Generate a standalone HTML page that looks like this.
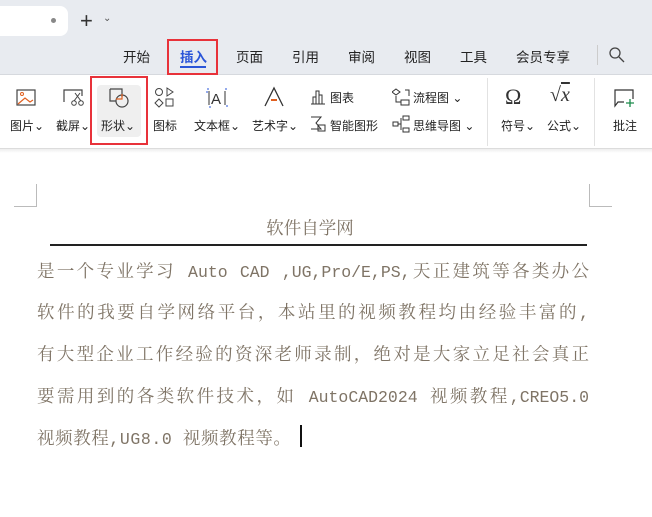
<!DOCTYPE html>
<html><head><meta charset="utf-8"><style>
*{margin:0;padding:0;box-sizing:border-box}
body{width:652px;height:517px;overflow:hidden;background:#fff;font-family:"Liberation Sans","Noto Sans CJK SC",sans-serif;position:relative;color:#222}
.top{position:absolute;left:0;top:0;width:652px;height:75px;background:#e8ebf0;border-bottom:1px solid #d6d9de}
.abs{position:absolute}
.tab{position:absolute;left:-10px;top:6px;width:78px;height:30px;background:#fff;border-radius:8px}
.m{position:absolute;top:46px;font-size:13.5px;color:#222}
.rib{position:absolute;left:0;top:75px;width:652px;height:74px;background:#fff;border-bottom:1px solid #dcdcdc}
.lb{position:absolute;top:117px;font-size:12px;color:#222;white-space:nowrap}
.red{position:absolute;border:2px solid #e8323a}
.doc{font-family:"Noto Serif CJK SC","Liberation Serif",serif;color:#7f7466;font-size:17.5px;position:absolute;left:37px;width:552px;white-space:nowrap;line-height:24px}
.doc span{font-family:"Liberation Mono",monospace;font-size:16.5px}
.j{text-align:justify;text-align-last:justify}
svg{position:absolute}
</style></head><body>
<div class="top">
 <div class="tab"></div>
 <div class="abs" style="left:51px;top:18px;width:5px;height:5px;border-radius:50%;background:#888"></div>
 <div class="abs" style="left:80px;top:8px;font-size:22px;color:#333">+</div>
 <div class="abs" style="left:103px;top:13px;font-size:10px;color:#555">⌄</div>
 <div class="m" style="left:123px">开始</div>
 <div class="m" style="left:180px;color:#2a55d8;font-weight:bold">插入</div>
 <div class="abs" style="left:180px;top:66px;width:26px;height:2px;background:#2a55d8"></div>
 <div class="m" style="left:236px">页面</div>
 <div class="m" style="left:292px">引用</div>
 <div class="m" style="left:348px">审阅</div>
 <div class="m" style="left:404px">视图</div>
 <div class="m" style="left:460px">工具</div>
 <div class="m" style="left:516px">会员专享</div>
 <div class="abs" style="left:597px;top:45px;width:1px;height:20px;background:#ccc"></div>
 <svg style="left:608px;top:46px" width="18" height="18"><circle cx="7" cy="7" r="5" fill="none" stroke="#444" stroke-width="1.3"/><path d="M11 11l5 5" stroke="#444" stroke-width="1.3"/></svg>
</div>
<div class="red" style="left:167px;top:39px;width:51px;height:36px"></div>
<div class="rib">
 <div class="abs" style="left:97px;top:10px;width:44px;height:52px;background:#efefef;border-radius:4px"></div>
 <div class="abs" style="left:487px;top:3px;width:1px;height:68px;background:#e2e2e2"></div>
 <div class="abs" style="left:594px;top:3px;width:1px;height:68px;background:#e2e2e2"></div>
</div>
<svg style="left:15px;top:88px" width="24" height="20"><rect x="2" y="2" width="18" height="15" fill="none" stroke="#444" stroke-width="1.2"/><circle cx="7" cy="6" r="1.5" fill="none" stroke="#e06020"/><path d="M3 16l7-6 5 4 3-2" fill="none" stroke="#e06020" stroke-width="1.2"/></svg>
<svg style="left:62px;top:88px" width="24" height="20"><path d="M2 14V2h18v6" fill="none" stroke="#444" stroke-width="1.2"/><circle cx="12" cy="15" r="2.3" fill="none" stroke="#444"/><circle cx="19" cy="15" r="2.3" fill="none" stroke="#444"/><path d="M12 13l6-8M19 13l-6-8" stroke="#444"/></svg>
<svg style="left:108px;top:87px" width="24" height="22"><path d="M2 2h12v8M2 2v12h6" fill="none" stroke="#444" stroke-width="1.2"/><circle cx="14" cy="14" r="6" fill="none" stroke="#444" stroke-width="1.2"/><path d="M8 12h6v-5" fill="none" stroke="#e06020" stroke-width="1.2"/></svg>
<svg style="left:154px;top:87px" width="22" height="22"><circle cx="5" cy="5" r="3.5" fill="none" stroke="#444"/><path d="M13 1v8l6-4z" fill="none" stroke="#444"/><path d="M5 12l4 4-4 4-4-4z" fill="none" stroke="#444"/><rect x="12" y="12" width="7" height="7" fill="none" stroke="#444"/></svg>
<svg style="left:205px;top:87px" width="24" height="22"><rect x="2" y="2" width="20" height="18" fill="none" stroke="#2a55d8" stroke-dasharray="2 16"/><text x="6" y="17" font-size="15" fill="#333" font-family="Liberation Sans">A</text><path d="M4 4v14M20 4v14" stroke="#333"/></svg>
<svg style="left:263px;top:86px" width="22" height="22"><path d="M2 20L11 2l9 18" fill="none" stroke="#333" stroke-width="1.3"/><path d="M8 14h6" stroke="#e06020" stroke-width="2"/></svg>
<svg style="left:309px;top:88px" width="18" height="18"><path d="M2 16h14M4 16V9h3v7M7 16V3h3v13M10 16V7h3v9" fill="none" stroke="#333"/></svg>
<div class="abs" style="left:330px;top:89px;font-size:12px">图表</div>
<svg style="left:309px;top:115px" width="18" height="18"><path d="M2 2h10l-5 6 5 6H2" fill="none" stroke="#333"/><rect x="9" y="10" width="7" height="6" fill="none" stroke="#333"/></svg>
<div class="abs" style="left:330px;top:117px;font-size:12px">智能图形</div>
<svg style="left:392px;top:88px" width="18" height="18"><path d="M4 1l4 3-4 3-4-3z" fill="none" stroke="#333"/><rect x="9" y="12" width="8" height="5" fill="none" stroke="#333"/><path d="M4 8v6h5M13 2h4v6" fill="none" stroke="#333"/></svg>
<div class="abs" style="left:413px;top:89px;font-size:12px">流程图 ⌄</div>
<svg style="left:392px;top:115px" width="18" height="18"><rect x="1" y="7" width="5" height="4" fill="none" stroke="#333"/><rect x="11" y="1" width="6" height="4" fill="none" stroke="#333"/><rect x="11" y="13" width="6" height="4" fill="none" stroke="#333"/><path d="M6 9h3M9 3v12" stroke="#333"/></svg>
<div class="abs" style="left:413px;top:117px;font-size:12px">思维导图 ⌄</div>
<div class="abs" style="left:505px;top:84px;font-size:22px;color:#333;font-family:'Liberation Serif',serif">Ω</div>
<div class="abs" style="left:550px;top:84px;font-size:20px;color:#333;font-family:'Liberation Serif',serif;font-style:italic">√<span style="text-decoration:overline">x</span></div>
<svg style="left:613px;top:88px" width="24" height="20"><path d="M2 14V2h18v9M2 14V18l3-4h6" fill="none" stroke="#333" stroke-width="1.2"/><path d="M17 11v8M13 15h8" stroke="#1a8a4a" stroke-width="1.3"/></svg>
<div class="lb" style="left:10px">图片⌄</div>
<div class="lb" style="left:56px">截屏⌄</div>
<div class="lb" style="left:101px">形状⌄</div>
<div class="lb" style="left:153px">图标</div>
<div class="lb" style="left:194px">文本框⌄</div>
<div class="lb" style="left:252px">艺术字⌄</div>
<div class="lb" style="left:501px">符号⌄</div>
<div class="lb" style="left:547px">公式⌄</div>
<div class="lb" style="left:613px">批注</div>
<div class="red" style="left:90px;top:76px;width:58px;height:69px"></div>
<div class="abs" style="left:0;top:149px;width:652px;height:4px;background:linear-gradient(#eee,#fff)"></div>
<div class="abs" style="left:14px;top:184px;width:23px;height:23px;border-right:1px solid #bbb;border-bottom:1px solid #bbb"></div>
<div class="abs" style="left:589px;top:184px;width:23px;height:23px;border-left:1px solid #bbb;border-bottom:1px solid #bbb"></div>
<div class="doc" style="top:216px;left:0;width:620px;text-align:center;color:#7f7466">软件自学网</div>
<div class="abs" style="left:50px;top:244px;width:537px;height:1.5px;background:#222"></div>
<div class="doc j" style="top:259px">是一个专业学习<span> Auto CAD ,UG,Pro/E,PS,</span>天正建筑等各类办公</div>
<div class="doc j" style="top:300px">软件的我要自学网络平台，本站里的视频教程均由经验丰富的<span>,</span></div>
<div class="doc j" style="top:342px">有大型企业工作经验的资深老师录制，绝对是大家立足社会真正</div>
<div class="doc j" style="top:384px">要需用到的各类软件技术，如<span> AutoCAD2024 </span>视频教程<span>,CREO5.0</span></div>
<div class="doc" style="top:426px;letter-spacing:0.6px">视频教程<span>,UG8.0 </span>视频教程等。</div>
<div class="abs" style="left:300px;top:425px;width:2px;height:22px;background:#111"></div>
</body></html>
